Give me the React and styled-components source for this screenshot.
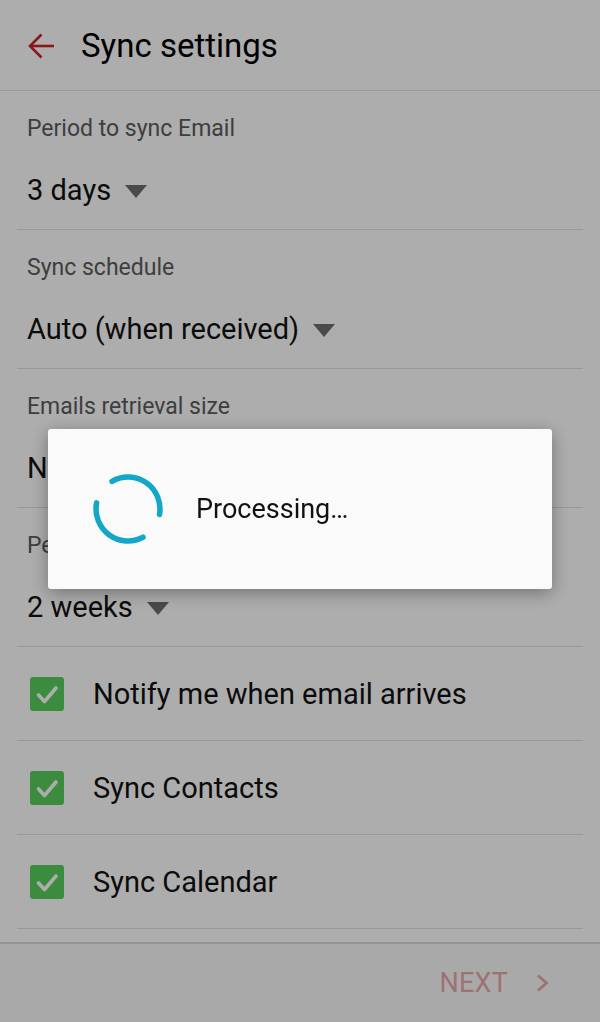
import styled, { createGlobalStyle } from 'styled-components';

const GlobalStyle = createGlobalStyle`
  html, body {
    margin: 0;
    padding: 0;
    background: #ffffff;
  }
  body {
    font-family: Roboto, "Noto Sans", "Liberation Sans", sans-serif;
    -webkit-font-smoothing: antialiased;
  }
`;

const Screen = styled.div`
  width: 600px;
  height: 1022px;
  display: flex;
  flex-direction: column;
  background: #ffffff;
  overflow: hidden;
`;

const Header = styled.header`
  height: 91px;
  box-sizing: border-box;
  flex-shrink: 0;
  display: flex;
  align-items: center;
  padding-left: 28px;
  gap: 27px;
  border-bottom: 1px solid #e4e4e4;
`;

const BackButton = styled.button`
  display: flex;
  padding: 0;
  border: 0;
  background: none;
  color: #cc2424;
  margin-top: 1px;
`;

const Title = styled.h1`
  margin: 0;
  font-size: 33px;
  font-weight: 400;
  color: #000;
`;

const List = styled.div`
  flex: 1;
  margin: 0 17px;
  display: flex;
  flex-direction: column;
`;

const Section = styled.div`
  height: 139px;
  box-sizing: border-box;
  padding: 24px 10px 0;
  display: flex;
  flex-direction: column;
  gap: 30px;
  border-bottom: 1px solid #e2e2e2;
`;

const Label = styled.div`
  font-size: 23px;
  line-height: 28px;
  color: #5c5c5c;
`;

const Value = styled.div`
  display: flex;
  align-items: center;
  font-size: 29px;
  line-height: 34px;
  color: #111;
`;

const Caret = styled.svg`
  margin-left: 14px;
  margin-top: 2px;
  fill: #6d6d6d;
`;

const CheckRow = styled.label`
  height: 94px;
  box-sizing: border-box;
  display: flex;
  align-items: center;
  padding-left: 13px;
  gap: 29px;
  border-bottom: 1px solid #e2e2e2;
  font-size: 29px;
  color: #111;
`;

const Box = styled.span`
  width: 34px;
  height: 34px;
  border-radius: 3px;
  background: #58cf5d;
  display: flex;
  align-items: center;
  justify-content: center;
  flex-shrink: 0;
`;

const BottomBar = styled.footer`
  height: 80px;
  box-sizing: border-box;
  flex-shrink: 0;
  border-top: 2px solid #dcdcdc;
  background: #f9f9f9;
  display: flex;
  align-items: center;
  justify-content: flex-end;
  padding-right: 51px;
  gap: 28px;
`;

const NextText = styled.span`
  font-size: 27px;
  color: #e8a9a9;
  letter-spacing: 0.2px;
`;

const Dim = styled.div`
  position: fixed;
  inset: 0;
  background: rgba(0, 0, 0, 0.32);
  display: flex;
  align-items: center;
  justify-content: center;
`;

const Dialog = styled.div`
  width: 504px;
  height: 160px;
  margin-bottom: 4px;
  background: #fafafa;
  border-radius: 3px;
  box-shadow: 0 4px 18px rgba(0, 0, 0, 0.35);
  display: flex;
  align-items: center;
  padding-left: 45px;
  box-sizing: border-box;
  gap: 33px;
`;

const Message = styled.span`
  font-size: 27px;
  color: #111;
`;

const ArrowBack = () => (
  <svg width="26" height="26" viewBox="0 0 26 26" fill="none" stroke="currentColor" strokeWidth="2.6">
    <path d="M26 13H2" />
    <path d="M13.5 1.5L2 13l11.5 11.5" />
  </svg>
);

const DropCaret = () => (
  <Caret width="22" height="13" viewBox="0 0 22 13">
    <path d="M0 0h22L11 13z" />
  </Caret>
);

const Check = () => (
  <Box>
    <svg width="34" height="34" viewBox="0 0 34 34" fill="none" stroke="#fff" strokeWidth="3.6" strokeLinecap="round" strokeLinejoin="round">
      <path d="M8.5 18l6 6.5L26 11" />
    </svg>
  </Box>
);

const Spinner = () => (
  <svg width="70" height="70" viewBox="0 0 70 70" fill="none" stroke="#12a7c9" strokeWidth="5.5" strokeLinecap="round">
    <path d="M19 7.29A32 32 0 0 1 66.51 40.56" />
    <path d="M50.02 63.25A32 32 0 0 1 3.59 28.89" />
  </svg>
);

const Chevron = () => (
  <svg width="13" height="18" viewBox="0 0 13 18" fill="none" stroke="#e8a9a9" strokeWidth="2.8">
    <path d="M2 1.5L10.5 9 2 16.5" />
  </svg>
);

const settings = [
  { label: 'Period to sync Email', value: '3 days' },
  { label: 'Sync schedule', value: 'Auto (when received)' },
  { label: 'Emails retrieval size', value: 'No limit' },
  { label: 'Period to sync Calendar', value: '2 weeks' },
];

const toggles = ['Notify me when email arrives', 'Sync Contacts', 'Sync Calendar'];

const App = () => (
  <>
    <GlobalStyle />
    <Screen>
      <Header>
        <BackButton aria-label="Back">
          <ArrowBack />
        </BackButton>
        <Title>Sync settings</Title>
      </Header>
      <List>
        {settings.map((s) => (
          <Section key={s.label}>
            <Label>{s.label}</Label>
            <Value>
              {s.value}
              <DropCaret />
            </Value>
          </Section>
        ))}
        {toggles.map((t) => (
          <CheckRow key={t}>
            <Check />
            {t}
          </CheckRow>
        ))}
      </List>
      <BottomBar>
        <NextText>NEXT</NextText>
        <Chevron />
      </BottomBar>
    </Screen>
    <Dim>
      <Dialog>
        <Spinner />
        <Message>Processing…</Message>
      </Dialog>
    </Dim>
  </>
);

export default App;
